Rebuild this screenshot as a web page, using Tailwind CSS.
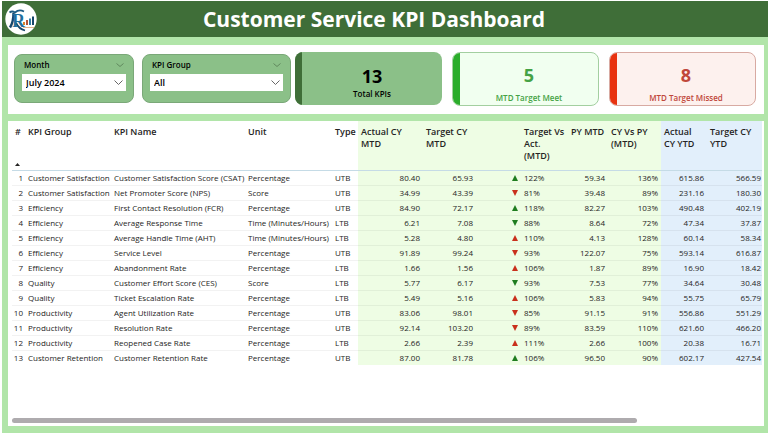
<!DOCTYPE html>
<html lang="en">
<head>
  <meta charset="UTF-8" />
  <meta name="viewport" content="width=device-width, initial-scale=1.0" />
  <title>Customer Service KPI Dashboard</title>
  <script src="https://cdn.jsdelivr.net/npm/@tailwindcss/browser@4"></script>
</head>
<body class="bg-white font-['Segoe_UI','Open_Sans',sans-serif] text-[#252423]">
  <div class="min-h-screen flex flex-col pt-px pl-0.5">

    <header class="relative h-9 shrink-0 bg-[#3f6e38] flex items-center justify-center">
      <svg class="absolute left-[3px] top-[2px] size-8" viewBox="0 0 32 32" aria-label="Logo">
        <circle cx="16" cy="16" r="15.7" fill="#fff" />
        <path d="M4.500 9.500 Q7 7.500 10 9.500 Q14 6 19 8.500" stroke="#1d5c84" stroke-width="1.800" fill="none" />
        <path d="M8.500 10 Q8.500 19 5 24.500" stroke="#17476b" stroke-width="2.400" fill="none" />
        <path d="M11 20 Q14 26 20 27.500" stroke="#17476b" stroke-width="1.800" fill="none" />
        <text x="7" y="24" font-family="Liberation Serif, serif" font-size="18" font-weight="bold" fill="#1f6f9e">R</text>
        <rect x="18" y="19" width="2" height="3" fill="#d9822b" />
        <rect x="21" y="17" width="2" height="5" fill="#b3543a" />
        <rect x="24" y="15.500" width="2" height="6.500" fill="#2f7fa8" />
        <rect x="27" y="13.500" width="2" height="8.500" fill="#17476b" />
        <path d="M18 24.500 H29" stroke="#e2b48c" stroke-width="1" />
      </svg>
      <h1 class="text-[21px] leading-7 font-bold text-white pr-[22px]">Customer Service KPI Dashboard</h1>
    </header>

    <main class="flex-1 bg-[#b1e5a9] flex flex-col gap-[7px] pt-2 pl-1.5 pr-1 pb-[7px]">

      <!-- Slicers and KPI cards -->
      <section class="bg-white flex gap-1 pl-1.5 pr-2 pt-[7px] pb-2">
        <div class="flex-[277] flex gap-2 pt-0.5 pb-[3px]">
          <div class="flex-[118] rounded-lg border border-[#7aa878] bg-[#8bc088] px-[7px] pt-1">
            <div class="flex items-center justify-between h-3 mb-[3px] px-0.5">
              <label for="month" class="text-[8px] leading-3 font-semibold text-black">Month</label>
              <svg class="w-2 h-1" viewBox="0 0 8 4" fill="none" stroke="#557a53" stroke-width="0.8"><path d="M0.500 0.500 L4 3.500 L7.500 0.500" /></svg>
            </div>
            <div class="relative">
              <select id="month" class="block w-full h-[17px] appearance-none rounded-none bg-white pl-1 text-[9px] leading-4 font-semibold text-black">
                <option>July 2024</option>
              </select>
              <svg class="absolute right-[3px] top-[6px] w-[9px] h-[5px] pointer-events-none" viewBox="0 0 9 5" fill="none" stroke="#666"><path d="M0.500 0.500 L4.500 4.500 L8.500 0.500" /></svg>
            </div>
          </div>
          <div class="flex-[151] rounded-lg border border-[#7aa878] bg-[#8bc088] px-[7px] pt-1">
            <div class="flex items-center justify-between h-3 mb-[3px] px-0.5">
              <label for="group" class="text-[8px] leading-3 font-semibold text-black">KPI Group</label>
              <svg class="w-2 h-1" viewBox="0 0 8 4" fill="none" stroke="#557a53" stroke-width="0.8"><path d="M0.500 0.500 L4 3.500 L7.500 0.500" /></svg>
            </div>
            <div class="relative">
              <select id="group" class="block w-full h-[17px] appearance-none rounded-none bg-white pl-1 text-[9px] leading-4 font-semibold text-black">
                <option>All</option>
              </select>
              <svg class="absolute right-[3px] top-[6px] w-[9px] h-[5px] pointer-events-none" viewBox="0 0 9 5" fill="none" stroke="#666"><path d="M0.500 0.500 L4.500 4.500 L8.500 0.500" /></svg>
            </div>
          </div>
        </div>

        <div class="flex-[461] grid grid-cols-3 gap-2.5 text-center">
          <div class="flex h-[53px] rounded-lg overflow-hidden bg-[#8bc088]">
            <div class="w-[7px] bg-[#3f6e38]"></div>
            <div class="flex-1 pt-3 text-black">
              <p class="text-[18px] leading-6 font-bold">13</p>
              <p class="text-[8px] leading-3 font-semibold">Total KPIs</p>
            </div>
          </div>
          <div class="flex h-[54px] rounded-lg overflow-hidden border border-[#a3cfa0] bg-[#f1fff0]">
            <div class="w-[7px] bg-[#2bad2b]"></div>
            <div class="flex-1 pt-2.5 text-[#45a245]">
              <p class="text-[18px] leading-6 font-bold">5</p>
              <p class="text-[8px] leading-3 font-semibold pt-[5px]">MTD Target Meet</p>
            </div>
          </div>
          <div class="flex h-[54px] rounded-lg overflow-hidden border border-[#d8aaa2] bg-[#fdf1ee]">
            <div class="w-[7px] bg-[#e8320f]"></div>
            <div class="flex-1 pt-2.5 text-[#c0473a]">
              <p class="text-[18px] leading-6 font-bold">8</p>
              <p class="text-[8px] leading-3 font-semibold pt-[5px]">MTD Target Missed</p>
            </div>
          </div>
        </div>
      </section>

      <!-- KPI table -->
      <section class="flex-1 bg-white flex flex-col justify-between pl-1 pr-0.5 pb-[3px]">
        <table class="w-full table-fixed border-collapse text-[8px] leading-[14px] whitespace-nowrap">
          <colgroup>
            <col class="w-[13px]" /><col class="w-[86px]" /><col class="w-[134px]" /><col class="w-[87px]" /><col class="w-[26px]" />
            <col class="w-[65px] bg-[#eefde4]" /><col class="w-[53px] bg-[#eefde4]" /><col class="w-[92px] bg-[#eefde4]" /><col class="w-[40px] bg-[#eefde4]" /><col class="w-[53px] bg-[#eefde4]" />
            <col class="w-[46px] bg-[#e2effb]" /><col class="w-[55px] bg-[#e2effb]" />
          </colgroup>
          <thead class="text-left align-top text-[9px] leading-3">
            <tr class="h-[49px] border-b border-[#c5dbe6]">
              <th class="pt-[5px] pl-[3px] font-semibold">
                #
                <svg class="w-[5px] h-[3px] mt-[25px]" viewBox="0 0 5 3"><path d="M0 3 L2.500 0 L5 3 Z" fill="#252423" /></svg>
              </th>
              <th class="pt-[5px] pl-[3px] font-semibold">KPI Group</th>
              <th class="pt-[5px] pl-[3px] font-semibold">KPI Name</th>
              <th class="pt-[5px] pl-[3px] font-semibold">Unit</th>
              <th class="pt-[5px] pl-[3px] font-semibold">Type</th>
              <th class="pt-[5px] pl-[3px] font-semibold">Actual CY<br />MTD</th>
              <th class="pt-[5px] pl-[3px] font-semibold">Target CY<br />MTD</th>
              <th class="pt-[5px] pl-[48px] font-semibold">Target Vs<br />Act.<br />(MTD)</th>
              <th class="pt-[5px] pl-[3px] font-semibold">PY MTD</th>
              <th class="pt-[5px] pl-[3px] font-semibold">CY Vs PY<br />(MTD)</th>
              <th class="pt-[5px] pl-[3px] font-semibold">Actual<br />CY YTD</th>
              <th class="pt-[5px] pl-[3px] font-semibold">Target CY<br />YTD</th>
            </tr>
          </thead>
          <tbody id="rows"></tbody>
        </table>
        <div class="h-[5px] w-5/6 rounded-full bg-[#aeabae]"></div>
      </section>
    </main>
  </div>

  <script>
    // group, name, unit, type, actual MTD, target MTD, arrow, target vs actual, PY MTD, CY vs PY, actual YTD, target YTD
    const kpis = [
      ["Customer Satisfaction", "Customer Satisfaction Score (CSAT)", "Percentage", "UTB", "80.40", "65.93", "up good", "122%", "59.34", "136%", "615.86", "566.59"],
      ["Customer Satisfaction", "Net Promoter Score (NPS)", "Score", "UTB", "34.99", "43.39", "down bad", "81%", "39.48", "89%", "231.16", "180.30"],
      ["Efficiency", "First Contact Resolution (FCR)", "Percentage", "UTB", "84.90", "72.17", "up good", "118%", "82.27", "103%", "490.48", "402.19"],
      ["Efficiency", "Average Response Time", "Time (Minutes/Hours)", "LTB", "6.21", "7.08", "down good", "88%", "8.64", "72%", "47.34", "37.87"],
      ["Efficiency", "Average Handle Time (AHT)", "Time (Minutes/Hours)", "LTB", "5.28", "4.80", "up bad", "110%", "4.13", "128%", "60.14", "58.34"],
      ["Efficiency", "Service Level", "Percentage", "UTB", "91.89", "99.24", "down bad", "93%", "122.07", "75%", "593.14", "616.87"],
      ["Efficiency", "Abandonment Rate", "Percentage", "LTB", "1.66", "1.56", "up bad", "106%", "1.87", "89%", "16.90", "18.42"],
      ["Quality", "Customer Effort Score (CES)", "Score", "LTB", "5.77", "6.17", "down good", "93%", "7.53", "77%", "34.64", "30.48"],
      ["Quality", "Ticket Escalation Rate", "Percentage", "LTB", "5.49", "5.16", "up bad", "106%", "5.83", "94%", "55.75", "65.79"],
      ["Productivity", "Agent Utilization Rate", "Percentage", "UTB", "83.06", "98.01", "down bad", "85%", "91.15", "91%", "556.86", "551.29"],
      ["Productivity", "Resolution Rate", "Percentage", "UTB", "92.14", "103.20", "down bad", "89%", "83.59", "110%", "621.60", "466.20"],
      ["Productivity", "Reopened Case Rate", "Percentage", "LTB", "2.66", "2.39", "up bad", "111%", "2.66", "100%", "20.38", "16.71"],
      ["Customer Retention", "Customer Retention Rate", "Percentage", "UTB", "87.00", "81.78", "up good", "106%", "96.50", "90%", "602.17", "427.54"]
    ];

    function arrow(kind) {
      const path = kind.startsWith("up") ? "M0 6 L3 0 L6 6 Z" : "M0 0 L6 0 L3 6 Z";
      const color = kind.endsWith("good") ? "#1f7d1f" : "#c9301c";
      return `<svg class="w-1.5 h-1.5" viewBox="0 0 6 6"><path d="${path}" fill="${color}" /></svg>`;
    }

    document.getElementById("rows").innerHTML = kpis.map((k, i) => `
      <tr class="h-[15px] border-b border-black/5 last:border-b-0">
        <td class="pr-0.5 text-right">${i + 1}</td>
        <td class="pl-[3px]">${k[0]}</td>
        <td class="pl-[3px]">${k[1]}</td>
        <td class="pl-[3px]">${k[2]}</td>
        <td class="pl-[3px]">${k[3]}</td>
        <td class="pr-[3px] text-right">${k[4]}</td>
        <td class="pr-[3px] text-right">${k[5]}</td>
        <td class="pl-9"><div class="flex items-center gap-1.5">${arrow(k[6])}<span>${k[7]}</span></div></td>
        <td class="pr-[3px] text-right">${k[8]}</td>
        <td class="pr-[3px] text-right">${k[9]}</td>
        <td class="pr-[3px] text-right">${k[10]}</td>
        <td class="pr-px text-right">${k[11]}</td>
      </tr>`).join("");
  </script>
</body>
</html>
